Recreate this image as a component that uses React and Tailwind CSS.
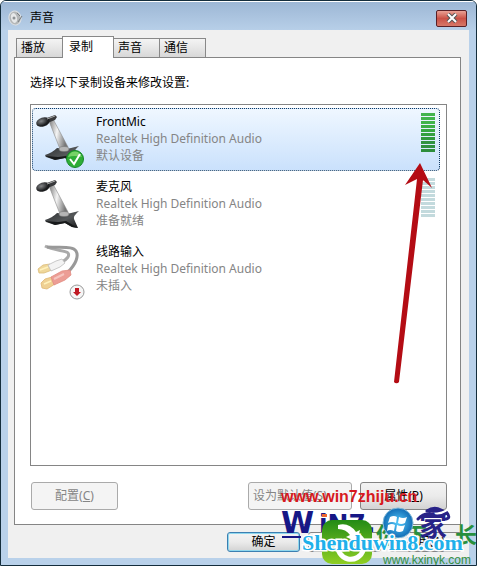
import React from "react";

const sans = "font-['Noto_Sans','Noto_Sans_CJK_SC',sans-serif]";

function Mic() {
  return (
    <svg viewBox="0 0 50 55" className="h-[55px] w-[50px]" aria-hidden="true">
      <defs>
        <linearGradient id="stem" x1="0" x2="1" y2=".3">
          <stop offset="0" stopColor="#777" />
          <stop offset=".5" stopColor="#f4f4f4" />
          <stop offset="1" stopColor="#777" />
        </linearGradient>
        <linearGradient id="base" x1="0" y1="0" x2="1" y2="1">
          <stop offset="0" stopColor="#2a2c2e" />
          <stop offset=".55" stopColor="#55585a" />
          <stop offset="1" stopColor="#151617" />
        </linearGradient>
        <radialGradient id="head" cx=".4" cy=".35">
          <stop offset="0" stopColor="#858789" />
          <stop offset="1" stopColor="#1c1d1f" />
        </radialGradient>
      </defs>
      <path d="M11 42Q18 40 23 35L33 36 45 33Q39 38 40 41L44 50 38 49 31 45 21 47 12 44Z" fill="url(#base)" />
      <path d="m11 43 13 1 8-1 12 7-6-1-7-4-10 2Z" fill="#17191a" />
      <path d="M15 8 19 6 34 34Q31 39 26 36Z" fill="url(#stem)" stroke="#8a8a8a" strokeWidth=".6" />
      <ellipse cx="30" cy="36" rx="5" ry="2.5" fill="#b5b5b5" stroke="#777" strokeWidth=".6" />
      <path d="m10 6 11-4 2 2-2 3-10 4Z" fill="#38393b" />
      <ellipse cx="9" cy="9" rx="7" ry="4.5" fill="url(#head)" transform="rotate(-18 9 9)" />
      <path d="m13 6 8-3" stroke="#aaa" strokeWidth="1" />
    </svg>
  );
}

function Cables() {
  return (
    <svg viewBox="0 0 50 55" className="h-[55px] w-[50px]" fill="none" aria-hidden="true">
      <path d="M11 3C20 8 32 7 34 10S33 16 28 19" stroke="#aaa" strokeWidth="3" />
      <path d="M13 4C29 5 39 3 42 8S42 21 34 29" stroke="#999" strokeWidth="3" />
      <path d="m4 26 5-4 7-1 2 6-8 3-5 0Z" fill="#efd79a" stroke="#dcbb78" strokeWidth=".8" />
      <path d="m14 22 8-4 6-2 3 4-5 4-9 4Z" fill="#f3f3f3" stroke="#bbb" strokeWidth=".8" />
      <path d="m7 40 4-4 7-2 3 7-8 5-5-1Z" fill="#efd093" stroke="#dfb673" strokeWidth=".8" />
      <path d="m17 34 11-6 8-1 1 5-6 5-11 5Z" fill="#ec9d95" stroke="#e28b82" strokeWidth=".8" />
      <path d="m6 27 8-3M10 41l7-3" stroke="#fff2bd" strokeWidth="1.5" />
      <path d="m20 36 10-5" stroke="#f6c5bf" strokeWidth="2" />
    </svg>
  );
}

const barColours = ["bg-[#43b34d]", "bg-[#43b34d]", "bg-[#40b44a]", "bg-[#3cae45]", "bg-[#37a842]", "bg-[#349f3f]", "bg-[#32993e]", "bg-[#319340]", "bg-[#30903f]", "bg-[#2e8e3b]"];

function Meter({ on }) {
  return (
    <div className="mr-1 flex w-3.5 flex-col gap-px">
      {barColours.map((c, i) => <span key={i} className={`h-[3px] ${on ? c : "bg-[#c3dadd]"}`} />)}
    </div>
  );
}

function Device({ name, state, icon, badge, selected, meter }) {
  return (
    <li className={`relative flex h-[63px] border pt-1 ${selected ? "rounded-sm border-dotted border-[#123b63] bg-linear-to-b from-[#eff7ff] to-[#cae1fc]" : "border-transparent"}`}>
      <div className="w-[63px] shrink-0 pl-px">{icon}</div>
      {badge}
      <div className="flex-1 text-xs leading-[17px] text-[#858585]">
        <div className="text-black">{name}</div>
        <div>Realtek High Definition Audio</div>
        <div>{state}</div>
      </div>
      {meter && <Meter on={selected} />}
    </li>
  );
}

const Check = () => (
  <svg className="absolute top-[41px] left-[33px] size-[18px]" viewBox="0 0 18 18" aria-hidden="true">
    <circle cx="9" cy="9" r="8.5" fill="#2ead36" stroke="#168726" />
    <path d="M2 7Q5 0 12 2L16 7Q8 5 2 7Z" fill="#77d267" />
    <path d="m4 9 4 5 6-10" fill="none" stroke="white" strokeWidth="2" />
  </svg>
);
const Down = () => (
  <svg className="absolute top-[45px] left-9 size-4" viewBox="0 0 16 16" aria-hidden="true">
    <circle cx="8" cy="8" r="7" fill="#f5f5f5" stroke="#999" />
    <path d="M6 4h4v4h2l-4 4-4-4h2Z" fill="#bf1822" />
  </svg>
);

function Button({ children, className = "border-[#858585]" }) {
  return <button className={`rounded-[3px] border bg-linear-to-b from-[#f3f3f3] via-[#ebebeb] via-50% to-[#d3d3d3] ${className}`}>{children}</button>;
}

function Watermarks() {
  return (
    <div className="pointer-events-none absolute -right-px -bottom-px h-20 w-[197px]">
      <svg viewBox="0 0 197 80" className="size-full" aria-hidden="true">
        <defs>
          <linearGradient id="leaf" x2="0" y2="1"><stop stopColor="#238b16" /><stop offset="1" stopColor="#8fcf24" /></linearGradient>
          <radialGradient id="orb"><stop stopColor="#55cafa" /><stop offset="1" stopColor="#126cb5" /></radialGradient>
        </defs>
        <text x="1" y="47" fill="#171786" fontFamily="DejaVu Sans" fontWeight="bold" fontSize="30">W</text>
        <text x="39" y="46" fill="#171786" fontFamily="DejaVu Sans" fontWeight="bold" fontSize="25">iN7.</text>
        <path d="M2 51h19" stroke="#171786" strokeWidth="2" />
        <path d="M42 28h5v3h-5z" fill="#ed6630" />
        <text x="96" y="57" fill="#288f3d" fontFamily="Noto Sans CJK SC" fontWeight="bold" fontSize="22">你</text>
        <text x="125" y="57" fill="#288f3d" fontFamily="Noto Sans CJK SC" fontWeight="bold" fontSize="22">下</text>
        <text x="139" y="51" fill="#282287" fontFamily="Noto Sans CJK SC" fontWeight="bold" fontSize="28">家</text>
        <text x="175" y="57" fill="#288f3d" fontFamily="Noto Sans CJK SC" fontWeight="bold" fontSize="22">长</text>
        <path d="M147 25q7-5 14-1q-6 2-14 1M138 33q7-7 14-4t15-2q4 5-1 6" fill="none" stroke="#282287" strokeWidth="3" strokeLinecap="round" />
        <circle cx="118" cy="37" r="15" fill="url(#orb)" stroke="#80b9d8" />
        <path d="m110 31q4-2 7 0l-1 6q-4-2-8 0ZM119 31q4 2 8 0l-2 6q-4 2-7 0ZM108 39q4-2 7 0l-1 6q-4-2-7 0ZM117 39q4 2 8 0l-2 6q-4 2-7 0Z" fill="white" />
        <rect x="42" y="34" width="50" height="44" rx="10" fill="url(#leaf)" />
        <path d="M75 48A13 13 0 1 1 58 58" fill="none" stroke="white" strokeWidth="5" />
        <path d="M58 39Q69 36 76 46L80 44 77 56 66 51 70 49Q66 43 58 43Z" fill="white" />
        <path d="M62 66q4-8 14-9-3 8-14 9Z" fill="#d9f1b5" />
        <text x="1" y="16" fill="#d71920" fontFamily="Liberation Sans" fontWeight="bold" fontSize="16">www.win7zhiju.cn</text>
        <text x="22" y="64" fill="#20b0ea" stroke="white" strokeWidth="3" paintOrder="stroke" fontFamily="Liberation Serif" fontWeight="bold" fontSize="22">Shenduwin8.com</text>
        <text x="103" y="78" fill="#368f3d" fontFamily="Liberation Sans" fontSize="12">www.kxinyk.com</text>
      </svg>
    </div>
  );
}

export default function App() {
  return (
    <div className={`relative flex min-h-screen flex-col overflow-hidden rounded-t-md border border-[#142d3c] bg-[#b9d1ea] px-[7px] pb-[7px] text-xs ${sans}`}>
      <header className="-mx-[7px] flex h-[29px] items-center border-t border-white bg-linear-to-b from-[#9db7d5] to-[#b7cfe8] pr-[9px] pl-[7px]">
        <svg className="mt-1 mr-1.5 size-4" viewBox="0 0 16 16" aria-hidden="true">
          <ellipse cx="7" cy="8" rx="6" ry="7" fill="#b4b7b8" stroke="#dde1e4" transform="rotate(-15 7 8)" />
          <ellipse cx="6" cy="8" rx="3" ry="5" fill="#e6e8e9" transform="rotate(-15 6 8)" />
          <circle cx="6" cy="8" r="1.5" fill="#8d9295" />
          <path d="m9 3 3 3m-2 6 4-6" stroke="#777c80" />
        </svg>
        <h1 className="flex-1 pt-1">声音</h1>
        <button aria-label="关闭" className="mt-1 flex h-[17px] w-[31px] items-center justify-center rounded-xs border border-[#592026] bg-linear-to-b from-[#e9a195] via-[#ca5146] via-50% to-[#d77868]">
          <svg viewBox="0 0 12 10" className="h-2.5 w-3" aria-hidden="true"><path d="m2 1 8 8m0-8L2 9" stroke="#555" strokeWidth="4" /><path d="m2 1 8 8m0-8L2 9" stroke="white" strokeWidth="2" /></svg>
        </button>
      </header>
      <main className="flex flex-1 flex-col bg-[#f0f0f0] px-1.5 pt-1.5">
        <nav role="tablist" className="flex h-[21px] items-end pl-[3px]">
          {["播放", "录制", "声音", "通信"].map((t, i) => (
            <button key={t} role="tab" aria-selected={i === 1} className={i === 1 ? "z-10 -mb-px -ml-px h-[22px] w-[52px] border border-b-0 border-[#888] bg-white pb-0.5 pl-1.5 text-left" : "-ml-px h-[19px] w-[47px] border border-b-0 border-[#888] bg-linear-to-b from-[#f4f4f4] to-[#d8d8d8] pl-1 text-left"}>{t}</button>
          ))}
        </nav>
        <section className="mr-0.5 flex flex-1 flex-col border border-[#858585] bg-white pr-[13px] pb-3.5 pl-[15px]">
          <p className="pt-4 pb-3 leading-[18px]">选择以下录制设备来修改设置:</p>
          <ul className="flex-1 space-y-0.5 border border-[#858585] py-[3px] pr-1.5 pl-px">
            <Device selected meter name="FrontMic" state="默认设备" icon={<Mic />} badge={<Check />} />
            <Device meter name="麦克风" state="准备就绪" icon={<Mic />} />
            <Device name="线路输入" state="未插入" icon={<Cables />} badge={<Down />} />
          </ul>
          <div className="mt-4 flex h-7 pl-px">
            <button disabled className="w-[87px] rounded-[3px] border border-[#aaa] bg-[#f4f4f4] text-[#858585]">配置(<u>C</u>)</button>
            <button disabled className="mr-2 ml-auto w-[104px] rounded-[3px] border border-[#aaa] bg-[#f4f4f4] pl-1 text-left text-[#858585]">设为默认值(<u>S</u>)</button>
            <Button className="w-[87px] border-[#858585]">属性(<u>P</u>)</Button>
          </div>
        </section>
        <footer className="flex h-[33px] items-start justify-end gap-2 pt-[7px] pr-px">
          <Button className="h-5 w-[73px] border-[#3c7fb1] ring-1 ring-[#8fd7ee] ring-inset">确定</Button>
          <Button className="h-5 w-[73px] border-[#858585]">取消</Button>
          <Button className="h-5 w-[73px] border-[#858585]">应用(<u>A</u>)</Button>
        </footer>
      </main>
      <svg className="pointer-events-none absolute top-[160px] right-[34px] h-[226px] w-14" viewBox="0 0 56 226" aria-hidden="true">
        <path d="m34 2 12 25-9-8L13 221a3 3 0 0 1-5 0L31 18 19 24Z" fill="#b40c14" />
      </svg>
      <Watermarks />
    </div>
  );
}
